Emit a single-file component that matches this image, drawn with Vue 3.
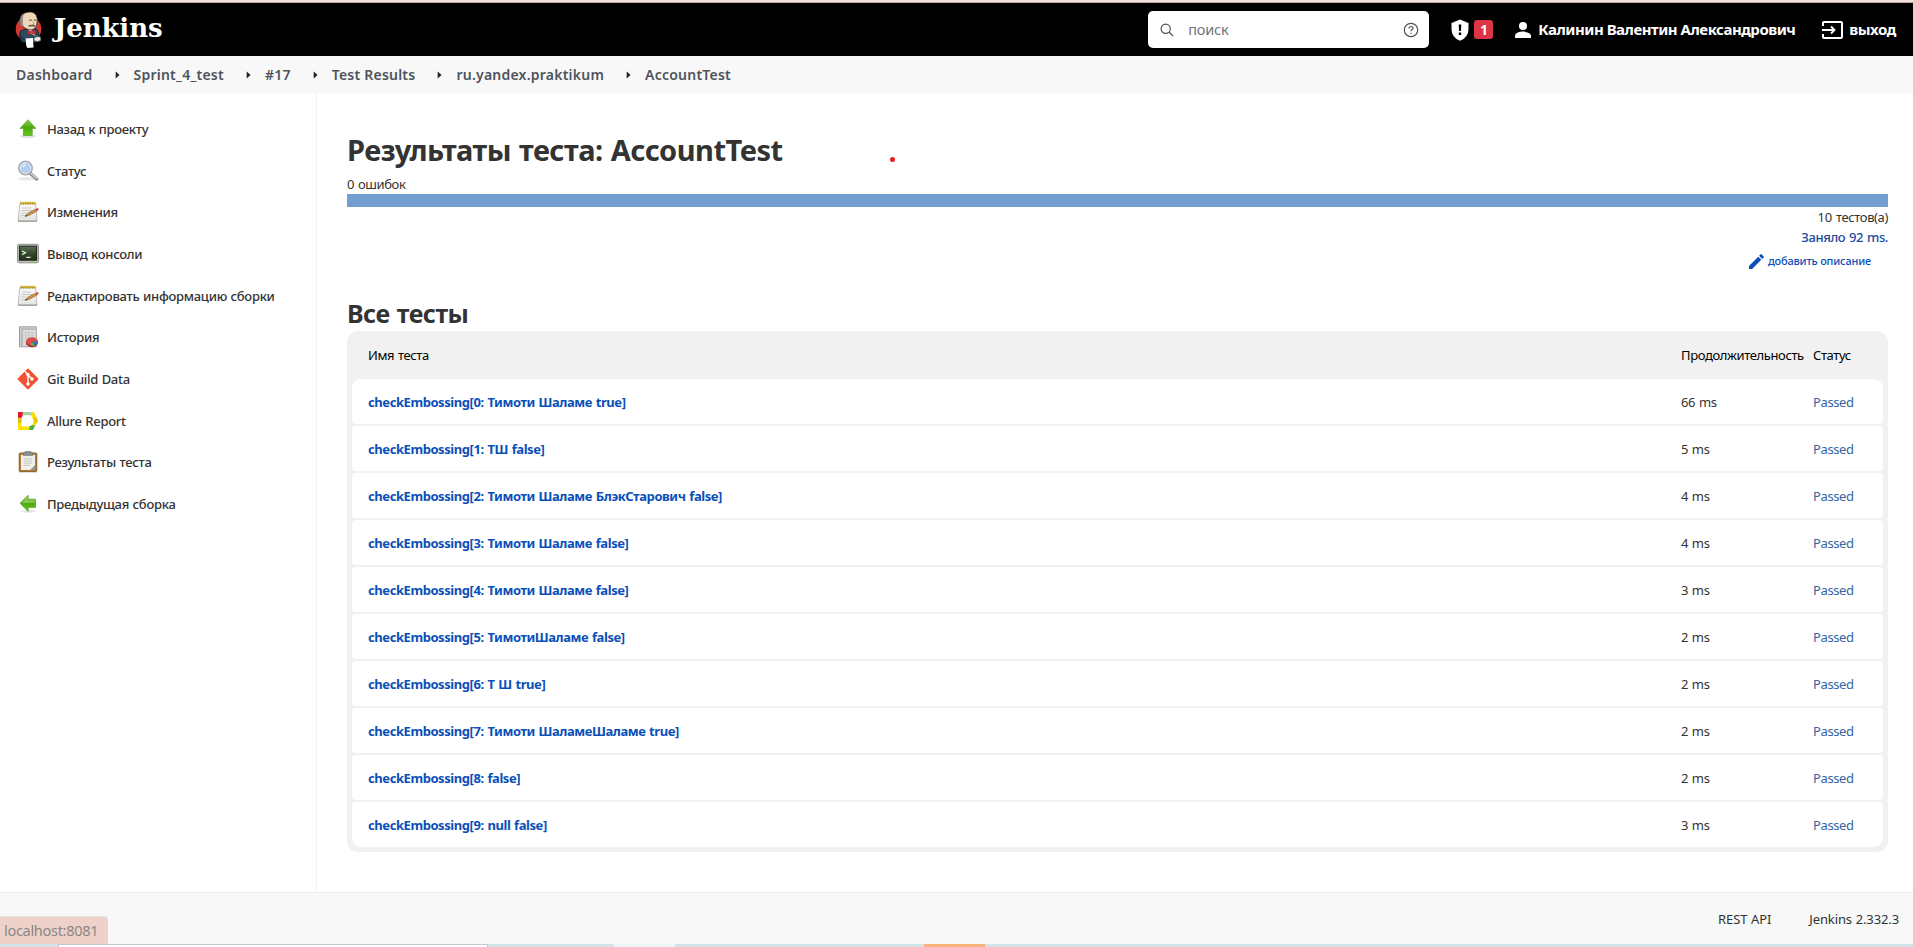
<script setup>
const crumbs = ['Dashboard', 'Sprint_4_test', '#17', 'Test Results', 'ru.yandex.praktikum', 'AccountTest']

const tasks = [
  { icon: 'up', label: 'Назад к проекту' },
  { icon: 'search', label: 'Статус' },
  { icon: 'notepad', label: 'Изменения' },
  { icon: 'terminal', label: 'Вывод консоли' },
  { icon: 'notepad', label: 'Редактировать информацию сборки' },
  { icon: 'graph', label: 'История' },
  { icon: 'git', label: 'Git Build Data' },
  { icon: 'allure', label: 'Allure Report' },
  { icon: 'clipboard', label: 'Результаты теста' },
  { icon: 'previous', label: 'Предыдущая сборка' },
]

const tests = [
  { name: 'checkEmbossing[0: Тимоти Шаламе true]', duration: '66 ms' },
  { name: 'checkEmbossing[1: ТШ false]', duration: '5 ms' },
  { name: 'checkEmbossing[2: Тимоти Шаламе БлэкСтарович false]', duration: '4 ms' },
  { name: 'checkEmbossing[3: Тимоти Шаламе false]', duration: '4 ms' },
  { name: 'checkEmbossing[4: Тимоти Шаламе false]', duration: '3 ms' },
  { name: 'checkEmbossing[5: ТимотиШаламе false]', duration: '2 ms' },
  { name: 'checkEmbossing[6: Т Ш true]', duration: '2 ms' },
  { name: 'checkEmbossing[7: Тимоти ШаламеШаламе true]', duration: '2 ms' },
  { name: 'checkEmbossing[8: false]', duration: '2 ms' },
  { name: 'checkEmbossing[9: null false]', duration: '3 ms' },
]
</script>

<template>
  <div class="page">
    <svg width="0" height="0" class="defs">
      <defs>
        <linearGradient id="green" x1="0" y1="0" x2="0" y2="1">
          <stop offset="0" stop-color="#8fce5a" />
          <stop offset="0.5" stop-color="#4ea80e" />
          <stop offset="1" stop-color="#68c91b" />
        </linearGradient>
        <linearGradient id="paper" x1="0" y1="0" x2="0" y2="1">
          <stop offset="0" stop-color="#fbfbfb" />
          <stop offset="1" stop-color="#e3e3e1" />
        </linearGradient>
        <linearGradient id="screen" x1="0" y1="0" x2="0" y2="1">
          <stop offset="0" stop-color="#5c7358" />
          <stop offset="0.5" stop-color="#34482f" />
          <stop offset="1" stop-color="#22331d" />
        </linearGradient>
      </defs>
    </svg>

    <div class="window-edge"></div>
    <header class="header">
      <a class="brand">
        <svg class="butler" width="28" height="38" viewBox="0 0 28 38">
          <ellipse cx="13.5" cy="18" rx="12.8" ry="12.6" fill="#d33833" />
          <path d="M5 20.5Q9 17.5 13 18.5L21 17.5Q24 20 24 26L22 31H7Q3.5 26 5 20.5Z" fill="#2b4a5c" stroke="#14222b" stroke-width=".8" />
          <path d="M6 12Q5 3 11 1.5Q18-.5 21 4Q23 7 22 12Q22 17 18 18.5Q14 20 10 17L7 15Z" fill="#f0d6b7" stroke="#231f20" stroke-width=".7" />
          <path d="M5 11Q4 4 10 2Q7 5 8 10Q7 13 9 15L7 15.6Q5 14 5 11Z" fill="#8b898a" />
          <path d="M14 9.5Q15.5 8 17 9.5M18.8 9.4Q20 8.2 21.2 9.4" fill="none" stroke="#4b4541" stroke-width=".9" />
          <path d="M17.5 10.5L19 13.2L17 13.8" fill="none" stroke="#b89777" stroke-width=".9" />
          <path d="M13.5 15Q17 13.8 20.3 15.1" fill="none" stroke="#5c534d" stroke-width="1.4" />
          <path d="M13 18.5L20 20.5L20.5 25L15 22Z" fill="#fff" />
          <path d="M12.5 19L16.5 20.5L20.8 18.8L20.5 24L16.5 22L12.8 23.5Z" fill="#d33833" stroke="#81171c" stroke-width=".6" />
          <path d="M4.5 24Q7 29 12 29" fill="none" stroke="#111f28" stroke-width=".9" />
          <path d="M10.5 27.5L18 27L18.5 36.5L12.5 37L11.3 35Z" fill="#fff" />
          <path d="M19 27Q22 24.5 25.5 26L25.8 29.5Q22 31.5 19 29.5Z" fill="#e9e9e9" stroke="#555" stroke-width=".7" />
        </svg>
        <span class="brand-name">Jenkins</span>
      </a>
      <div class="search">
        <svg width="14" height="14" viewBox="0 0 14 14" fill="none" stroke="#4d545d" stroke-width="1.2">
          <circle cx="5.7" cy="5.7" r="4.6" /><path d="M9 9L13 13" />
        </svg>
        <span class="search-text">поиск</span>
        <svg width="16" height="16" viewBox="0 0 16 16" fill="none" stroke="#4d545d" stroke-width="1.2">
          <circle cx="8" cy="8" r="6.7" />
          <path d="M6 6.4Q6 4.5 8 4.5Q10 4.5 10 6.2Q10 7.3 8.8 7.8Q8 8.2 8 9.3" />
          <path d="M8 10.7V12" />
        </svg>
      </div>
      <div class="alert">
        <svg width="18" height="22" viewBox="0 0 18 22">
          <path d="M9 .5L17.5 4V10Q17.5 18.5 9 21.7Q.5 18.5 .5 10V4Z" fill="#fff" />
          <path d="M7.7 5.5H10.3L9.9 12H8.1ZM7.8 13.5H10.2V15.9H7.8Z" fill="#000" />
        </svg>
        <span class="badge">1</span>
      </div>
      <a class="user">
        <svg width="16" height="16" viewBox="0 0 16 16" fill="#fff">
          <circle cx="8" cy="4" r="4" /><path d="M0 16V13.8C0 11 5 9.6 8 9.6S16 11 16 13.8V16Z" />
        </svg>
        <span>Калинин Валентин Александрович</span>
      </a>
      <a class="logout">
        <svg width="21" height="18" viewBox="0 0 21 18" fill="none" stroke="#fff" stroke-width="2">
          <path d="M1 5V2Q1 1 2 1H19Q20 1 20 2V16Q20 17 19 17H2Q1 17 1 16V13" />
          <path d="M0 9H12.5M9 5.5L12.5 9L9 12.5" stroke-width="1.8" />
        </svg>
        <span>выход</span>
      </a>
    </header>

    <nav class="crumbs">
      <template v-for="(crumb, i) in crumbs" :key="crumb">
        <svg v-if="i" class="crumb-arrow" width="41" height="8" viewBox="0 0 41 8">
          <path d="M22.7 .4L26.5 4L22.7 7.6Z" fill="#222" />
        </svg>
        <a>{{ crumb }}</a>
      </template>
    </nav>

    <div class="body">
      <aside class="side">
        <a v-for="task in tasks" :key="task.label" class="task">
          <svg width="22" height="22" viewBox="0 0 22 22">
            <g v-if="task.icon === 'up'">
              <ellipse cx="11" cy="18.3" rx="8" ry="1.6" fill="#dedede" />
              <path d="M11 1.8L18.8 10.4H15.2V17.4H6.4V10.4H3Z" fill="url(#green)" stroke="#5aa82c" stroke-width=".8" />
            </g>
            <g v-else-if="task.icon === 'search'">
              <ellipse cx="10" cy="18.8" rx="9" ry="1.8" fill="#e9e9e9" />
              <path d="M13.5 13.5L19.6 19" stroke="#8e8e8e" stroke-width="3.4" stroke-linecap="round" />
              <path d="M14 13.5L19.6 18.4" stroke="#cfcfcf" stroke-width="1.4" stroke-linecap="round" />
              <circle cx="8.5" cy="8" r="6.6" fill="#b3cdf0" stroke="#a5a8ac" stroke-width="1.8" />
              <circle cx="8.5" cy="8" r="5.5" fill="none" stroke="#edf2f8" stroke-width=".9" />
              <path d="M4.6 7.5Q5.4 3.9 9 3.7Q9 7.1 4.6 7.5Z" fill="#dfebfa" />
            </g>
            <g v-else-if="task.icon === 'notepad'">
              <path d="M3 2H18.7L20 20H1Z" fill="url(#paper)" stroke="#b7b7b3" stroke-width=".9" />
              <path d="M1 20.2H20" stroke="#8f8f8c" stroke-width="1" />
              <path d="M3.3 .8H18.2V3.2H3.3Z" fill="#d2b93c" />
              <path d="M3.5 3H18.2" stroke="#8d7719" stroke-width="1.2" stroke-dasharray="1.3 1" />
              <path d="M5 7H14M4.8 9.5H15M4.5 12H9M4.3 14.5H8" stroke="#c6c6c6" stroke-width=".9" />
              <path d="M8.2 15.3L10.5 12.5L18.7 8.2L19.9 10L11.5 14.5Z" fill="#d99a45" stroke="#80531e" stroke-width=".7" />
              <path d="M18.3 8L20.7 7Q22 7.6 21.7 9L19.8 10Z" fill="#d9574b" />
              <path d="M8 15.5L9.5 13.7L10.2 14.9Z" fill="#333" />
            </g>
            <g v-else-if="task.icon === 'terminal'">
              <rect x=".6" y="1.3" width="20.8" height="18.5" rx="1.8" fill="#c5c6c1" stroke="#8b8d88" />
              <rect x="2.5" y="3.2" width="17" height="14" fill="url(#screen)" stroke="#1e271c" stroke-width="1.1" />
              <path d="M5 8L8.5 9.8L5 11.6M9.3 14.3H13.5" fill="none" stroke="#e2efdc" stroke-width="1.2" />
              <path d="M14.5 18.5H16.2" stroke="#73d216" stroke-width="1.3" />
            </g>
            <g v-else-if="task.icon === 'graph'">
              <path d="M2.5 .8H19.3V20.8H2.5Z" fill="#e7e7e6" stroke="#92938f" stroke-width=".9" />
              <path d="M3.4 1.5H18.6V4.2H3.4ZM3.4 1.5H6V20.2H3.4Z" fill="#bcbdba" />
              <path d="M6 6.7H18.5M6 9H18.5M6 11.3H18.5M6 13.6H18.5M6 15.9H18.5M6 18.2H18.5M9 4.5V20M12 4.5V20M15 4.5V20" stroke="#bfbfbf" stroke-width=".8" />
              <ellipse cx="15" cy="16.6" rx="6" ry="4.6" fill="#a61c1c" />
              <ellipse cx="15" cy="15.4" rx="5.8" ry="4.1" fill="#e24a4a" />
              <path d="M15 15.6L20.8 15.3Q20.7 19 17.3 19.8Z" fill="#3c72be" />
              <path d="M15 15.6L17.3 19.8Q14.7 20.3 13.3 19.3Z" fill="#62b52b" />
            </g>
            <g v-else-if="task.icon === 'git'">
              <rect x="3.3" y="3.3" width="15.4" height="15.4" rx="1.2" transform="rotate(45 11 11)" fill="#f05133" />
              <path d="M8 3.5L11 6.5V16M11 7L15 11" fill="none" stroke="#fff" stroke-width="1.4" />
              <circle cx="11" cy="6.8" r="1.7" fill="#fff" /><circle cx="11" cy="16" r="1.7" fill="#fff" /><circle cx="15" cy="11" r="1.7" fill="#fff" />
            </g>
            <g v-else-if="task.icon === 'allure'">
              <path d="M5 2H14.5L16 5.2H5Z" fill="#a3d3a0" />
              <path d="M14 2H17L21 11L18 16H14.6L17 11L14 5.2Z" fill="#ffdf00" />
              <path d="M18.9 6.4L21 11L19.4 13.6L16.4 12.2L17 11L16 9Z" fill="#e8c80a" />
              <path d="M1 7.5H4.4V16.6H13V20H1Z" fill="#ffdf00" />
              <path d="M1 7.5H4.4V13H1Z" fill="#dfc313" />
              <path d="M1 2H5.6V6L4.4 7.8H1Z" fill="#e8142b" />
              <path d="M12.4 16.6L14.6 15.2H18.2L16 20H12.4Z" fill="#47ae4d" />
            </g>
            <g v-else-if="task.icon === 'clipboard'">
              <path d="M2 20.8H20" stroke="#c9c9c9" stroke-width="1.6" />
              <rect x="2.2" y="2" width="17.6" height="18.4" rx=".8" fill="#ae7930" stroke="#805315" stroke-width=".8" />
              <path d="M4 3.8H18V19H4Z" fill="#f1f1ef" />
              <path d="M13 19L18 14V19Z" fill="#999b97" />
              <path d="M6.5 7.8H15.5M6.5 10H15.5M6.5 12.2H14.5M6.5 14.4H13" stroke="#bfc0bd" stroke-width=".9" />
              <path d="M8 .6H14V1.8H15.8V4.6H6.2V1.8H8Z" fill="#8d908b" stroke="#686b66" stroke-width=".6" />
            </g>
            <g v-else>
              <ellipse cx="11.5" cy="18.3" rx="7.5" ry="1.4" fill="#e6e6e6" />
              <path d="M3 10.3L11.2 2.3V6.2H18.5V14.4H11.2V18.4Z" fill="url(#green)" stroke="#5aa82c" stroke-width=".8" />
              <path d="M4.5 10.3L10.6 4.5V7.3H17.5V9.8Z" fill="#b0dd88" opacity=".5" />
            </g>
          </svg>
          <span>{{ task.label }}</span>
        </a>
      </aside>

      <main class="main">
        <h1>Результаты теста: AccountTest</h1>
        <div class="failures">0 ошибок</div>
        <div class="bar"></div>
        <div class="summary">
          <div class="total">10 тестов(а)</div>
          <a class="took">Заняло 92 ms.</a>
          <a class="describe">
            <svg width="15" height="15" viewBox="0 0 15 15" fill="#0b4fb8">
              <path d="M0 11.9V15H3.1L12.3 5.8L9.2 2.7ZM14.7 3.4Q15.1 3 14.7 2.5L12.5 .3Q12-.1 11.6 .3L10.1 1.8L13.2 4.9Z" />
            </svg>
            <span>добавить описание</span>
          </a>
        </div>
        <h2>Все тесты</h2>
        <div class="table">
          <div class="table-row table-head">
            <span>Имя теста</span><span>Продолжительность</span><span>Статус</span>
          </div>
          <div v-for="test in tests" :key="test.name" class="table-row test">
            <a class="name">{{ test.name }}</a><span>{{ test.duration }}</span><span class="passed">Passed</span>
          </div>
        </div>
        <i class="marker"></i>
      </main>
    </div>

    <footer class="footer">
      <a class="rest">REST API</a>
      <a class="version">Jenkins 2.332.3</a>
    </footer>
    <div class="taskbar">
      <i class="window-tab"></i><i class="light-tab"></i><i class="orange-tab"></i>
    </div>
    <div class="link-hint">localhost:8081</div>
  </div>
</template>

<style>
body {
  margin: 0;
  overflow: hidden;
}
</style>

<style scoped>
.page {
  position: relative;
  display: flex;
  flex-direction: column;
  width: 1913px;
  height: 947px;
  overflow: hidden;
  background: #fff;
  color: #333;
  font: 400 13px/20px "Noto Sans", sans-serif;
  white-space: nowrap;
}
.page * {
  box-sizing: border-box;
}
.page svg {
  display: block;
  flex: none;
}
.page .defs {
  position: absolute;
}
.window-edge {
  flex: none;
  height: 3px;
  background: #f3dfda;
  border-bottom: 1px solid #c5a9a6;
}
.header {
  flex: none;
  display: flex;
  align-items: center;
  height: 53px;
  padding-right: 17px;
  background: #000;
  color: #fff;
  font-size: 15px;
  font-weight: 700;
  letter-spacing: -0.48px;
}
.brand {
  display: flex;
  align-items: center;
  gap: 11px;
  margin: 0 auto 0 15px;
}
.brand-name {
  margin-top: -4px;
  font: 700 26px/30px "DejaVu Serif", serif;
  letter-spacing: -0.1px;
}
.search {
  display: flex;
  align-items: center;
  width: 281px;
  height: 37px;
  margin-right: 22px;
  padding: 0 10px 0 12px;
  border-radius: 5px;
  background: #fff;
  color: #70757b;
}
.search-text {
  flex: 1;
  margin: -1px 0 0 14px;
  font-size: 14.5px;
  font-weight: 400;
  letter-spacing: -0.2px;
}
.alert {
  display: flex;
  align-items: center;
  gap: 5px;
  width: 64px;
}
.badge {
  width: 19px;
  height: 19px;
  border-radius: 3px;
  background: #dc3545;
  font-size: 14px;
  line-height: 19px;
  text-align: center;
}
.user {
  display: flex;
  align-items: center;
  gap: 7px;
  width: 307px;
}
.user span,
.logout span {
  margin-top: -1px;
}
.logout {
  display: flex;
  align-items: center;
  gap: 6px;
  letter-spacing: -0.4px;
}
.crumbs {
  flex: none;
  display: flex;
  align-items: center;
  height: 37px;
  padding: 1px 0 0 16px;
  background: #f8f8f8;
  color: #4d545d;
  font-size: 14px;
  font-weight: 600;
  letter-spacing: 0.23px;
}
.crumb-arrow {
  margin-top: -1px;
}
.body {
  flex: 1;
  display: flex;
  min-height: 0;
}
.side {
  display: flex;
  flex-direction: column;
  width: 317px;
  padding: 15px 0 0 17px;
  border-right: 1px solid #f0f0f0;
}
.task {
  display: flex;
  align-items: center;
  gap: 8px;
  height: 41.7px;
  font-weight: 500;
  letter-spacing: -0.28px;
  word-spacing: 0.5px;
}
.main {
  position: relative;
  width: 1541px;
  margin-left: 30px;
}
h1 {
  margin: 36px 0 0;
  font-size: 29px;
  font-weight: 700;
  line-height: 42px;
  letter-spacing: -0.5px;
  word-spacing: 1px;
}
.failures {
  margin-top: 3px;
  letter-spacing: -0.4px;
  word-spacing: 1px;
}
.bar {
  height: 13px;
  background: #729fcf;
}
.summary {
  display: flex;
  flex-direction: column;
  align-items: flex-end;
}
.total {
  height: 20px;
  letter-spacing: -0.38px;
  word-spacing: 1.2px;
}
.took {
  height: 20px;
  color: #204a9e;
  font-weight: 500;
  letter-spacing: -0.38px;
  word-spacing: 0.8px;
}
.describe {
  display: flex;
  align-items: center;
  gap: 4px;
  height: 28px;
  margin-right: 17px;
  color: #0b4fb8;
  font-size: 11px;
  font-weight: 500;
  letter-spacing: -0.18px;
}
h2 {
  margin: 20px 0 0;
  font-size: 25px;
  font-weight: 700;
  line-height: 36px;
  letter-spacing: -0.45px;
  word-spacing: 1px;
}
.table {
  display: flex;
  flex-direction: column;
  gap: 2px;
  height: 521px;
  padding: 0 5px 5px;
  border-radius: 11px;
  background: #f1f1f1;
}
.table-row {
  flex: 1;
  display: grid;
  grid-template-columns: 1313px 132px 1fr;
  align-items: center;
  padding-left: 16px;
  letter-spacing: -0.38px;
  word-spacing: 0.8px;
}
.table-head {
  flex: none;
  height: 46px;
  padding-top: 2px;
  color: #000;
}
.test {
  border-radius: 4px;
  background: #fff;
}
.test:nth-child(2) {
  border-radius: 9px 9px 4px 4px;
}
.test:last-child {
  border-radius: 4px 4px 9px 9px;
}
.name {
  color: #0b4fb8;
  font-weight: 700;
  letter-spacing: -0.43px;
}
.passed {
  color: #3465a4;
}
.marker {
  position: absolute;
  top: 64px;
  left: 543px;
  width: 5px;
  height: 5px;
  border-radius: 50%;
  background: #ed1c24;
}
.footer {
  flex: none;
  display: flex;
  justify-content: flex-end;
  gap: 38px;
  height: 52px;
  padding: 16px 14px 0 0;
  border-top: 1px solid #efefef;
  background: #f8f8f8;
  letter-spacing: -0.12px;
  word-spacing: 0.5px;
}
.taskbar {
  flex: none;
  display: flex;
  height: 3px;
  background: #d3e3e8;
}
.window-tab {
  width: 430px;
  margin-left: 58px;
  border: 1px solid #c4c8ca;
  border-bottom: 0;
  background: #fff;
}
.light-tab {
  width: 61px;
  margin-left: 126px;
  background: #edf5f6;
}
.orange-tab {
  width: 61px;
  margin-left: 249px;
  background: #f8b27c;
}
.link-hint {
  position: absolute;
  bottom: 3px;
  left: 0;
  width: 108px;
  height: 28px;
  padding-left: 4px;
  border-top: 1px solid #e6e2e1;
  border-radius: 0 4px 0 0;
  background: #eed2ca;
  color: #8a8685;
  font-size: 14.5px;
  line-height: 27px;
  letter-spacing: -0.3px;
}
</style>
